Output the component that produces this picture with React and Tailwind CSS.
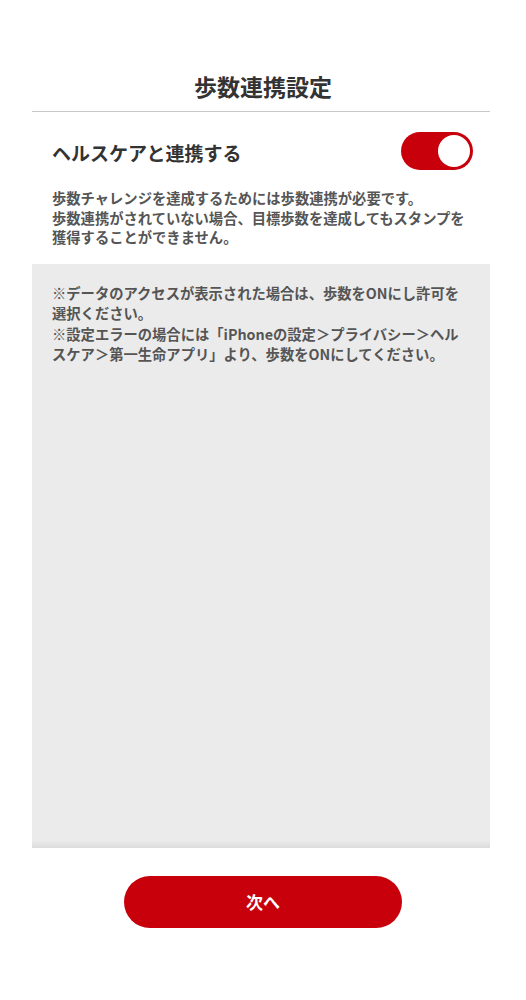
import React, { useState } from 'react';

const font = { fontFamily: '"Noto Sans CJK JP", "Noto Sans", sans-serif' };

function Toggle({ on, onChange }) {
  return (
    <button
      onClick={() => onChange(!on)}
      className={`w-[72px] h-[38px] rounded-full p-[3px] flex items-center ${
        on ? 'bg-[#c8000b] justify-end' : 'bg-[#cccccc] justify-start'
      }`}
    >
      <span className="w-[32px] h-[32px] rounded-full bg-white block" />
    </button>
  );
}

export default function App() {
  const [linked, setLinked] = useState(true);

  return (
    <div className="w-full min-h-screen bg-white flex flex-col" style={font}>
      {/* Header */}
      <h1 className="pt-[70px] text-center text-[23px] leading-[32px] font-bold text-[#333333]">
        歩数連携設定
      </h1>
      <div className="ml-8 mr-[36px] mt-[9px] h-px bg-[#c8c8c8]" />

      {/* Toggle row */}
      <div className="ml-[52px] mr-[53px] mt-[20px] flex items-center justify-between">
        <span className="text-[19px] leading-[26px] font-bold text-[#333333] pt-[3px]">
          ヘルスケアと連携する
        </span>
        <Toggle on={linked} onChange={setLinked} />
      </div>

      <p className="mx-[52px] mt-[18px] text-[14.3px] leading-[19.5px] font-bold text-[#555555] whitespace-nowrap">
        歩数チャレンジを達成するためには歩数連携が必要です。
        <br />
        歩数連携がされていない場合、目標歩数を達成してもスタンプを
        <br />
        獲得することができません。
      </p>

      {/* Notes box */}
      <div className="ml-8 mr-[36px] mt-[17px] h-[584px] bg-[#ebebeb] flex flex-col">
        <p className="px-5 pt-[19px] text-[14.3px] leading-[20.5px] font-bold text-[#555555] whitespace-nowrap">
          ※データのアクセスが表示された場合は、歩数をONにし許可を
          <br />
          選択ください。
          <br />
          ※設定エラーの場合には「iPhoneの設定＞プライバシー＞ヘル
          <br />
          スケア＞第一生命アプリ」より、歩数をONにしてください。
        </p>
        <div className="flex-1" />
        <div className="h-[8px] bg-gradient-to-b from-[#ebebeb] to-[#dcdcdc]" />
      </div>

      {/* Footer */}
      <div className="mt-[28px] flex justify-center">
        <button className="w-[278px] h-[52px] rounded-full bg-[#c8000b] text-white text-[17px] font-bold">
          次へ
        </button>
      </div>
    </div>
  );
}
